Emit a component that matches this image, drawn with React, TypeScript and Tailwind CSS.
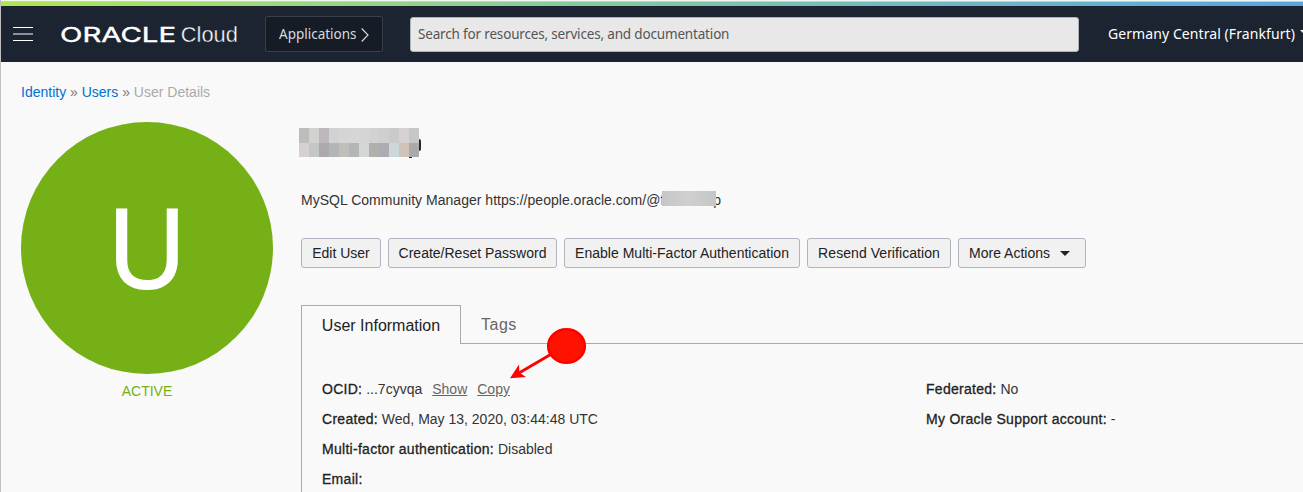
import React from 'react';

const mosaicTop = ['#bdbdbc', '#d3d2d1', '#bdb7be', '#d0d2d4', '#d5d5d3', '#d6d6d4', '#d4d6d5', '#d3d2d1', '#cfced1', '#c9cbca', '#d6d1d2', '#c6c7c7'];
const mosaicBottom = ['#d6d0d1', '#c4c7c5', '#aca8ac', '#b3b6b7', '#c0bfbb', '#b3b5b7', '#d5d7d6', '#b0b0ac', '#aeacb2', '#cdd6d8', '#d1c3b8', '#a9aaaa'];

function Btn({ children, className }: { children: React.ReactNode; className: string }) {
  return (
    <button className={`flex h-[30px] shrink-0 items-center justify-center whitespace-nowrap rounded-[3px] border border-[#afb4c0] bg-[#f1f1f1] text-[#222] ${className}`}>
      {children}
    </button>
  );
}

function Field({ label, children }: { label: string; children?: React.ReactNode }) {
  return (
    <div className="flex h-[30px] items-center whitespace-pre">
      <span className="tracking-[0.28px] text-[#222] [-webkit-text-stroke:0.3px_#222]">{label}</span>
      <span> </span>
      {children}
    </div>
  );
}

export default function App() {
  return (
    <div className="relative h-[492px] w-[1303px] overflow-hidden border-l border-[#c0c0c2] bg-[#f9f9f9] font-['Liberation_Sans',sans-serif] text-[14px] leading-[20px] text-[#333]">
      <div className="h-0.5 border-b border-[#cdcaca] bg-[#f6f5f5]" />
      <div className="h-1 bg-linear-to-r from-[#aee64b] via-[#82c5a4] to-[#57a5e0]" />
      <header className="flex h-14 items-center bg-[#1b2430] font-['Noto_Sans',sans-serif] text-white">
        <svg className="ml-3 h-4 w-5 shrink-0" viewBox="0 0 20 16" shapeRendering="crispEdges">
          <rect y="1" width="20" height="1" fill="#fff" />
          <rect y="7" width="20" height="2" fill="#8d9197" />
          <rect y="14" width="20" height="1" fill="#fff" />
        </svg>
        <svg className="ml-[27px] h-8 w-[180px] shrink-0" viewBox="0 0 180 32" fill="#fff">
          <text x="0" y="23.800" fontFamily="Inter, sans-serif" fontSize="20.500" fontWeight="400" stroke="#fff" strokeWidth="0.400" textLength="116" lengthAdjust="spacingAndGlyphs">ORACLE</text>
          <text x="120.800" y="24" fontFamily="Liberation Sans, sans-serif" fontSize="22.500" fill="#fff" stroke="#1b2430" strokeWidth="0.400" textLength="57" lengthAdjust="spacingAndGlyphs">Cloud</text>
        </svg>
        <div className="ml-[25px] flex h-9 w-[118px] shrink-0 items-center rounded-[2px] border border-[#363f4a] bg-[#151c25] pl-[13px] text-[13.5px] text-[#d9dbdd]">
          <span>Applications</span>
          <svg className="ml-1 mt-0.5 h-4 w-2" viewBox="0 0 8 16" fill="none" stroke="#d4d6d8" strokeWidth="1.2">
            <path d="M.7 1.500 7 8 .7 14.500" />
          </svg>
        </div>
        <div className="ml-[27px] flex h-[35px] w-[669px] shrink-0 items-center rounded-[3px] border border-[#aeb4bb] bg-[#e8e8e8] pl-[7px] text-[13.5px] tracking-[-0.17px] text-[#555]">Search for resources, services, and documentation</div>
        <div className="ml-[29px] flex shrink-0 items-center text-[14px] tracking-[0.08px]">
          <span>Germany Central (Frankfurt)</span>
          <svg className="-mt-1 ml-[5px] h-[5px] w-2.5" viewBox="0 0 10 5"><path d="M0 0h10L5 5z" fill="#fff" /></svg>
        </div>
      </header>

      <nav className="ml-5 mt-5 flex h-5 whitespace-pre text-[#0070d0]">
        <span>Identity</span><span className="text-[#777]"> » </span><span>Users</span><span className="text-[#777]"> » </span><span className="text-[#aaa]">User Details</span>
      </nav>

      <main className="flex">
        <aside className="ml-5 mt-5 flex w-[252px] shrink-0 flex-col items-center">
          <div className="flex size-[252px] items-center justify-center rounded-full bg-[#75b016] pb-1.5 font-['Open_Sans',sans-serif] text-[109px] font-medium leading-none text-white [-webkit-text-stroke:2px_#fff]">U</div>
          <div className="mt-[7px] text-[#75b016]">ACTIVE</div>
        </aside>

        <section className="ml-7 flex min-w-0 grow flex-col">
          <div className="relative -ml-0.5 mt-[26px] flex h-[30px]">
            <div className="h-[29px] w-[120px]">
              <div className="flex h-[15px]">{mosaicTop.map((c, i) => <div key={i} className="h-full w-2.5" style={{ backgroundColor: c }} />)}</div>
              <div className="flex h-3.5">{mosaicBottom.map((c, i) => <div key={i} className="h-full w-2.5" style={{ backgroundColor: c }} />)}</div>
            </div>
            <div className="mt-[11px] h-3 w-[2px] rounded-r-full bg-[#202735]" />
            <div className="absolute left-[110px] top-[29px] h-px w-[3px] bg-[#202735]" />
          </div>
          <div className="mt-[32px] flex h-5 whitespace-nowrap">
            <span className="tracking-[0.02px]">MySQL Community Manager https://people.oracle.com/@f</span>
            <div className="relative -ml-0.5 mt-px h-[15px] w-[54px] shrink-0 bg-linear-to-r from-[#c5c6c9] via-[#d0d0cf] to-[#c4c5c5]" />
            <span className="-ml-[3px]">p</span>
          </div>
          <div className="mt-7 flex gap-[7px]">
            <Btn className="w-20">Edit User</Btn>
            <Btn className="w-[169px]">Create/Reset Password</Btn>
            <Btn className="w-[236px] tracking-[0.02px]">Enable Multi-Factor Authentication</Btn>
            <Btn className="w-36 tracking-[0.06px]">Resend Verification</Btn>
            <Btn className="w-32 gap-2.5 pr-[5px]">
              <span>More Actions</span>
              <svg className="h-[5px] w-2.5" viewBox="0 0 10 5"><path d="M0 0h10L5 5z" fill="#222" /></svg>
            </Btn>
          </div>
          <div className="mt-[37px] flex h-[39px] text-[16px]">
            <div className="flex w-40 items-center justify-center border-x border-t border-[#aaa] pt-0.5 text-[#222]">User Information</div>
            <div className="grow border-b border-[#aaa] pl-5 pt-[10px] tracking-[0.5px] text-[#666]">Tags</div>
          </div>
          <div className="flex h-[160px] border-l border-[#aaa] pl-5 pt-[30px]">
            <div className="w-[604px]">
              <Field label="OCID:">
                <span>...7cyvqa</span>
                <span className="ml-2.5 text-[#666] underline">Show</span>
                <span className="ml-2.5 text-[#666] underline">Copy</span>
              </Field>
              <Field label="Created:">Wed, May 13, 2020, 03:44:48 UTC</Field>
              <Field label="Multi-factor authentication:">Disabled</Field>
              <Field label="Email:" />
            </div>
            <div>
              <Field label="Federated:">No</Field>
              <Field label="My Oracle Support account:">-</Field>
            </div>
          </div>
        </section>
      </main>

      <svg className="absolute left-[508px] top-[326px] h-14 w-20" viewBox="0 0 80 56">
        <path d="M42 28.300 10 47" stroke="#ff0000" strokeWidth="2.800" />
        <path d="M1 52.200 10 38.500 10.500 46.800 17 51z" fill="#ff0000" />
        <ellipse cx="57.500" cy="20" rx="18.300" ry="16.800" fill="#ff1200" stroke="#ff0000" strokeWidth="2.600" />
        <ellipse cx="58" cy="20" rx="8" ry="13" fill="none" stroke="#f91a07" strokeWidth="1" />
      </svg>
    </div>
  );
}
